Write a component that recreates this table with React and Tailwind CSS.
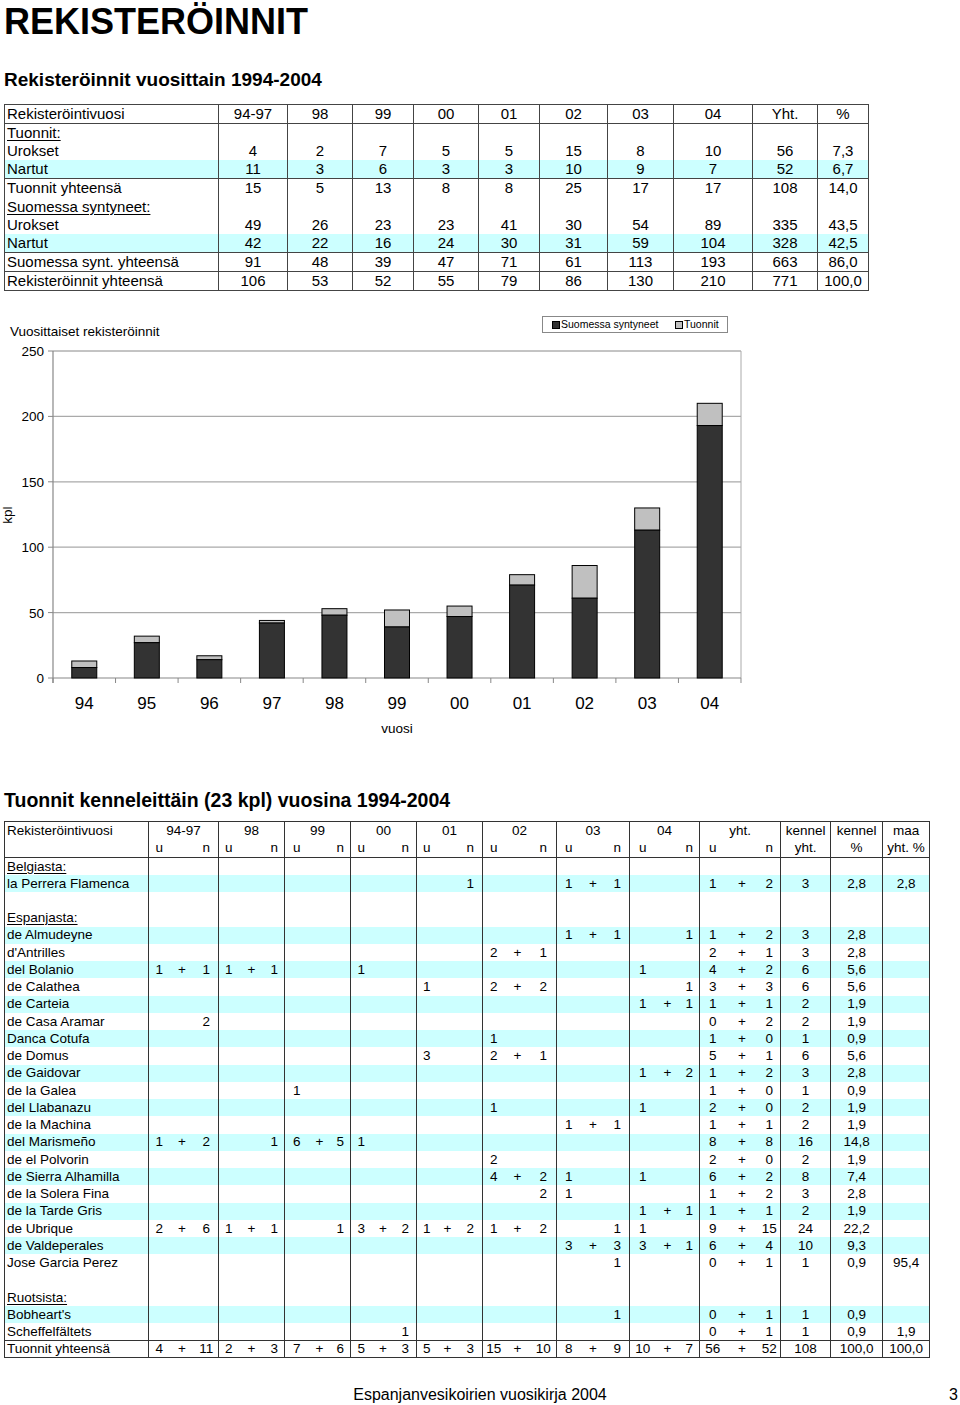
import React from "react";

const cols1 = ["w-[214px]", "w-[69px]", "w-[65px]", "w-[61px]", "w-[65px]", "w-[61px]", "w-[68px]", "w-[66px]", "w-[79px]", "w-[65px]", "w-[51px]"];

const table1 = [
  { label: "Rekisteröintivuosi", vals: ["94-97", "98", "99", "00", "01", "02", "03", "04", "Yht.", "%"], line: true },
  { label: "Tuonnit:", under: true },
  { label: "Urokset", vals: ["4", "2", "7", "5", "5", "15", "8", "10", "56", "7,3"] },
  { label: "Nartut", vals: ["11", "3", "6", "3", "3", "10", "9", "7", "52", "6,7"], cyan: true, line: true },
  { label: "Tuonnit yhteensä", vals: ["15", "5", "13", "8", "8", "25", "17", "17", "108", "14,0"] },
  { label: "Suomessa syntyneet:", under: true },
  { label: "Urokset", vals: ["49", "26", "23", "23", "41", "30", "54", "89", "335", "43,5"] },
  { label: "Nartut", vals: ["42", "22", "16", "24", "30", "31", "59", "104", "328", "42,5"], cyan: true, line: true },
  { label: "Suomessa synt. yhteensä", vals: ["91", "48", "39", "47", "71", "61", "113", "193", "663", "86,0"], line: true },
  { label: "Rekisteröinnit yhteensä", vals: ["106", "53", "52", "55", "79", "86", "130", "210", "771", "100,0"] },
];

// name, 9 groups x (u, +, n), kennel yht, kennel %, maa
const cols2 = [
  "w-[144px]",
  "w-[21px]", "w-[25px]", "w-[24px]",
  "w-[20px]", "w-[26px]", "w-[20px]",
  "w-[24px]", "w-[22px]", "w-[20px]",
  "w-[21px]", "w-[23px]", "w-[22px]",
  "w-[20px]", "w-[22px]", "w-[24px]",
  "w-[22px]", "w-[26px]", "w-[26px]",
  "w-[24px]", "w-[25px]", "w-[24px]",
  "w-[26px]", "w-[24px]", "w-[20px]",
  "w-[26px]", "w-[33px]", "w-[22px]",
  "w-[50px]", "w-[52px]", "w-[47px]",
];

const years = ["94-97", "98", "99", "00", "01", "02", "03", "04", "yht."];

// g: index of year group -> [u, n]
const table2 = [
  { head: "Belgiasta:" },
  { name: "la Perrera Flamenca", cyan: true, g: { 4: [null, 1], 6: [1, 1] }, t: [1, 2], k: "3", p: "2,8", m: "2,8" },
  { empty: true },
  { head: "Espanjasta:" },
  { name: "de Almudeyne", cyan: true, g: { 6: [1, 1], 7: [null, 1] }, t: [1, 2], k: "3", p: "2,8" },
  { name: "d'Antrilles", g: { 5: [2, 1] }, t: [2, 1], k: "3", p: "2,8" },
  { name: "del Bolanio", cyan: true, g: { 0: [1, 1], 1: [1, 1], 3: [1, null], 7: [1, null] }, t: [4, 2], k: "6", p: "5,6" },
  { name: "de Calathea", g: { 4: [1, null], 5: [2, 2], 7: [null, 1] }, t: [3, 3], k: "6", p: "5,6" },
  { name: "de Carteia", cyan: true, g: { 7: [1, 1] }, t: [1, 1], k: "2", p: "1,9" },
  { name: "de Casa Aramar", g: { 0: [null, 2] }, t: [0, 2], k: "2", p: "1,9" },
  { name: "Danca Cotufa", cyan: true, g: { 5: [1, null] }, t: [1, 0], k: "1", p: "0,9" },
  { name: "de Domus", g: { 4: [3, null], 5: [2, 1] }, t: [5, 1], k: "6", p: "5,6" },
  { name: "de Gaidovar", cyan: true, g: { 7: [1, 2] }, t: [1, 2], k: "3", p: "2,8" },
  { name: "de la Galea", g: { 2: [1, null] }, t: [1, 0], k: "1", p: "0,9" },
  { name: "del Llabanazu", cyan: true, g: { 5: [1, null], 7: [1, null] }, t: [2, 0], k: "2", p: "1,9" },
  { name: "de la Machina", g: { 6: [1, 1] }, t: [1, 1], k: "2", p: "1,9" },
  { name: "del Marismeño", cyan: true, g: { 0: [1, 2], 1: [null, 1], 2: [6, 5], 3: [1, null] }, t: [8, 8], k: "16", p: "14,8" },
  { name: "de el Polvorin", g: { 5: [2, null] }, t: [2, 0], k: "2", p: "1,9" },
  { name: "de Sierra Alhamilla", cyan: true, g: { 5: [4, 2], 6: [1, null], 7: [1, null] }, t: [6, 2], k: "8", p: "7,4" },
  { name: "de la Solera Fina", g: { 5: [null, 2], 6: [1, null] }, t: [1, 2], k: "3", p: "2,8" },
  { name: "de la Tarde Gris", cyan: true, g: { 7: [1, 1] }, t: [1, 1], k: "2", p: "1,9" },
  { name: "de Ubrique", g: { 0: [2, 6], 1: [1, 1], 2: [null, 1], 3: [3, 2], 4: [1, 2], 5: [1, 2], 6: [null, 1], 7: [1, null] }, t: [9, 15], k: "24", p: "22,2" },
  { name: "de Valdeperales", cyan: true, g: { 6: [3, 3], 7: [3, 1] }, t: [6, 4], k: "10", p: "9,3" },
  { name: "Jose Garcia Perez", g: { 6: [null, 1] }, t: [0, 1], k: "1", p: "0,9", m: "95,4" },
  { empty: true },
  { head: "Ruotsista:" },
  { name: "Bobheart's", cyan: true, g: { 6: [null, 1] }, t: [0, 1], k: "1", p: "0,9" },
  { name: "Scheffelfältets", g: { 3: [null, 1] }, t: [0, 1], k: "1", p: "0,9", m: "1,9" },
  {
    name: "Tuonnit yhteensä", top: true,
    g: { 0: [4, 11], 1: [2, 3], 2: [7, 6], 3: [5, 3], 4: [5, 3], 5: [15, 10], 6: [8, 9], 7: [10, 7] },
    t: [56, 52], k: "108", p: "100,0", m: "100,0",
  },
];

const chartData = [
  ["94", 13, 8], ["95", 32, 27], ["96", 17, 14], ["97", 44, 42], ["98", 53, 48], ["99", 52, 39],
  ["00", 55, 47], ["01", 79, 71], ["02", 86, 61], ["03", 130, 113], ["04", 210, 193],
];

const Trio = ({ v, top }) => {
  const [u, n] = v || [null, null];
  const both = u != null && n != null;
  const tb = top ? " border-t" : "";
  return (
    <>
      <td className={"border-l border-[#333] text-center p-0" + tb}>{u}</td>
      <td className={"text-center p-0 border-[#333]" + tb}>{both ? "+" : ""}</td>
      <td className={"text-center p-0 border-[#333]" + tb}>{n}</td>
    </>
  );
};

const Chart = () => {
  const oy = 293;
  const py = (v) => 678 - v * 1.308 - oy;
  const step = 62.545;
  return (
    <svg width="960" height="487" className="block mt-[2px]">
      <text x="10" y={336 - oy} fontSize="13.5">Vuosittaiset rekisteröinnit</text>

      <rect x="542.5" y={316.5 - oy} width="185" height="16" fill="#fff" stroke="#888" />
      <rect x="552.5" y={321.5 - oy} width="7" height="7" fill="#333" stroke="#000" />
      <text x="561" y={328 - oy} fontSize="10.5">Suomessa syntyneet</text>
      <rect x="675.5" y={321.5 - oy} width="7" height="7" fill="#c0c0c0" stroke="#000" />
      <text x="684" y={328 - oy} fontSize="10.5">Tuonnit</text>

      {[50, 100, 150, 200].map((v) => (
        <line key={v} x1="53" x2="741" y1={py(v)} y2={py(v)} stroke="#aaa" strokeWidth="1.2" />
      ))}
      <line x1="53" x2="741" y1={py(250)} y2={py(250)} stroke="#888" />
      <line x1="741" x2="741" y1={py(250)} y2={py(0)} stroke="#aaa" />
      <line x1="53" x2="53" y1={py(250)} y2={py(0) + 5} stroke="#888" strokeWidth="1.2" />
      {[0, 50, 100, 150, 200, 250].map((v) => (
        <g key={v}>
          <line x1="48" x2="53" y1={py(v)} y2={py(v)} stroke="#888" />
          <text x="44" y={py(v) + 5} fontSize="13.5" textAnchor="end">{v}</text>
        </g>
      ))}
      <line x1="53" x2="741" y1={py(0)} y2={py(0)} stroke="#888" strokeWidth="1.2" />
      {Array.from({ length: 12 }).map((_, i) => (
        <line key={i} x1={53 + i * step} x2={53 + i * step} y1={py(0)} y2={py(0) + 5} stroke="#888" />
      ))}

      {chartData.map(([lab, total, dark], i) => {
        const cx = 53 + (i + 0.5) * step;
        return (
          <g key={lab}>
            <rect x={cx - 12.5} y={py(total)} width="25" height={py(dark) - py(total)} fill="#c0c0c0" stroke="#000" />
            <rect x={cx - 12.5} y={py(dark)} width="25" height={py(0) - py(dark)} fill="#333" stroke="#000" />
            <text x={cx} y={709 - oy} fontSize="17" textAnchor="middle">{lab}</text>
          </g>
        );
      })}

      <text x="397" y={733 - oy} fontSize="13.5" textAnchor="middle">vuosi</text>
      <text x="12" y={515 - oy} fontSize="13.5" textAnchor="middle" transform={`rotate(-90 12 ${515 - oy})`}>kpl</text>
    </svg>
  );
};

export default function App() {
  return (
    <div className="w-[960px] h-[1405px] bg-white text-black overflow-hidden font-['Liberation_Sans',Arial,sans-serif]">
      <div className="pl-[4px] pt-[2px] text-[36px] leading-[40px] font-bold">REKISTERÖINNIT</div>
      <div className="pl-[4px] mt-[27px] text-[19px] leading-[22px] font-bold">Rekisteröinnit vuosittain 1994-2004</div>

      <table className="ml-[4px] mt-[13px] w-[864px] table-fixed border-collapse border border-[#444] text-[15px] leading-[18px]">
        <colgroup>
          {cols1.map((c, i) => (
            <col key={i} className={c} />
          ))}
        </colgroup>
        <tbody>
          {table1.map((r, i) => (
            <tr key={i} className={"h-[18.4px] " + (r.cyan ? "bg-[#ccffff]" : "")}>
              <td className={"p-0 pl-[2px] border-r border-[#444] whitespace-nowrap " + (r.line ? "border-b" : "")}>
                <span className={r.under ? "underline underline-offset-2" : ""}>{r.label}</span>
              </td>
              {Array.from({ length: 10 }).map((_, j) => (
                <td key={j} className={"p-0 text-center border-r border-[#444] " + (r.line ? "border-b" : "")}>
                  {r.vals ? r.vals[j] : ""}
                </td>
              ))}
            </tr>
          ))}
        </tbody>
      </table>

      <Chart />

      <div className="pl-[4px] mt-[9px] text-[19.5px] leading-[22px] font-bold">Tuonnit kenneleittäin (23 kpl) vuosina 1994-2004</div>

      <table className="ml-[4px] mt-[10px] w-[925px] table-fixed border-collapse border border-[#333] text-[13.5px] leading-[16px]">
        <colgroup>
          {cols2.map((c, i) => (
            <col key={i} className={c} />
          ))}
        </colgroup>
        <tbody>
          <tr className="h-[18px]">
            <td className="p-0 pl-[2px]">Rekisteröintivuosi</td>
            {years.map((y) => (
              <td key={y} colSpan={3} className="p-0 text-center border-l border-[#333]">{y}</td>
            ))}
            <td className="p-0 text-center border-l border-[#333]">kennel</td>
            <td className="p-0 text-center border-l border-[#333]">kennel</td>
            <td className="p-0 text-center border-l border-[#333]">maa</td>
          </tr>
          <tr className="h-[18px] border-b border-[#333]">
            <td className="p-0"></td>
            {years.map((y) => (
              <React.Fragment key={y}>
                <td className="p-0 text-center border-l border-[#333]">u</td>
                <td className="p-0"></td>
                <td className="p-0 text-center">n</td>
              </React.Fragment>
            ))}
            <td className="p-0 text-center border-l border-[#333]">yht.</td>
            <td className="p-0 text-center border-l border-[#333]">%</td>
            <td className="p-0 text-center border-l border-[#333]">yht. %</td>
          </tr>
          {table2.map((r, i) => {
            const tb = r.top ? " border-t border-[#333]" : "";
            return (
              <tr key={i} className={"h-[17.26px] " + (r.cyan ? "bg-[#ccffff]" : "")}>
                <td className={"p-0 pl-[2px] whitespace-nowrap" + tb}>
                  {r.head ? <span className="underline underline-offset-2">{r.head}</span> : r.name}
                </td>
                {Array.from({ length: 8 }).map((_, j) => (
                  <Trio key={j} v={r.g ? r.g[j] : null} top={r.top} />
                ))}
                <Trio v={r.t} top={r.top} />
                <td className={"p-0 text-center border-l border-[#333]" + tb}>{r.k}</td>
                <td className={"p-0 text-center border-l border-[#333]" + tb}>{r.p}</td>
                <td className={"p-0 text-center border-l border-[#333]" + tb}>{r.m}</td>
              </tr>
            );
          })}
        </tbody>
      </table>

      <div className="mt-[27px] grid grid-cols-[1fr_auto_1fr] items-baseline text-[16px] leading-[20px]">
        <div></div>
        <div>Espanjanvesikoirien vuosikirja 2004</div>
        <div className="justify-self-end pr-[2px]">3</div>
      </div>
    </div>
  );
}
